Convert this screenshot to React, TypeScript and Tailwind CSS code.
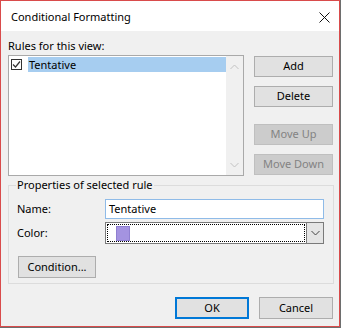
import React from 'react';

const font = { fontFamily: '"Segoe UI", "Noto Sans", "Open Sans", sans-serif' };

function Chevron({ up, className }: { up?: boolean; className?: string }) {
  return (
    <svg width="9" height="6" viewBox="0 0 9 6" className={className}>
      <path
        d={up ? 'M0.5 5 L4.5 1 L8.5 5' : 'M0.5 1 L4.5 5 L8.5 1'}
        fill="none"
        stroke="currentColor"
        strokeWidth="1"
      />
    </svg>
  );
}

function Btn({ label, disabled, className = '' }: { label: string; disabled?: boolean; className?: string }) {
  return (
    <div
      className={
        'h-[21px] flex items-center justify-center text-[11px] border ' +
        (disabled
          ? 'bg-[#cccccc] border-[#bfbfbf] text-[#838383] '
          : 'bg-[#e1e1e1] border-[#adadad] text-black ') +
        className
      }
    >
      {label}
    </div>
  );
}

export default function App() {
  return (
    <div className="w-[341px] h-[328px] bg-[#6e6e6e]" style={font}>
      <div className="w-[340px] h-[327px] border border-[#d94b4b] bg-[#f0f0f0] flex flex-col">
        {/* Title bar */}
        <div className="h-[30px] bg-white flex items-center justify-between pl-[10px] pr-[9px] pt-[2px]">
          <span className="text-[11px] text-black">Conditional Formatting</span>
          <svg width="11" height="11" viewBox="0 0 11 11">
            <path d="M0.5 0.5 L10.5 10.5 M10.5 0.5 L0.5 10.5" stroke="#111" strokeWidth="1" />
          </svg>
        </div>

        <div className="pl-[7px] pt-[8px] text-black">
          {/* Rules list + buttons */}
          <div className="flex">
            <div className="w-[236px]">
              <div className="h-[16px] leading-[14px] text-[11px]">Rules for this view:</div>
              <div className="h-[121px] border border-[#a9a9a9] bg-white flex">
                <div className="flex-1 pt-[1px]">
                  <div className="flex items-center h-[15px]">
                    <div className="ml-[2px] w-[11px] h-[11px] border border-[#333] bg-white flex items-center justify-center">
                      <svg width="9" height="9" viewBox="0 0 9 9">
                        <path d="M1 4.5 L3.5 7 L8 1.5" fill="none" stroke="#333" strokeWidth="1.2" />
                      </svg>
                    </div>
                    <div className="ml-[6px] flex-1 h-[15px] bg-[#a6cdf0] pl-[1px] text-[11px] leading-[15px]">Tentative</div>
                  </div>
                </div>
                <div className="w-[17px] bg-[#f0f0f0] flex flex-col items-center justify-between pt-[8px] pb-[7px] text-[#c2c2c2]">
                  <Chevron up />
                  <Chevron />
                </div>
              </div>
            </div>
            <div className="ml-[10px] w-[79px] pt-[17px]">
              <Btn label="Add" />
              <Btn label="Delete" className="mt-[9px]" />
              <Btn label="Move Up" disabled className="mt-[17px]" />
              <Btn label="Move Down" disabled className="mt-[9px]" />
            </div>
          </div>

          {/* Properties group */}
          <div className="relative mt-[9px] w-[326px] h-[99px] border border-[#dcdcdc] pl-[8px] pr-[9px] pt-[13px]">
            <span className="absolute -top-[9px] left-[7px] bg-[#f0f0f0] px-[1px] text-[11px] leading-[16px]">
              Properties of selected rule
            </span>
            <div className="flex items-center">
              <span className="w-[88px] text-[11px]">Name:</span>
              <div className="w-[219px] h-[20px] border border-[#8fbbe8] bg-white flex items-center pl-[3px] text-[11px]">
                Tentative
              </div>
            </div>
            <div className="flex items-center mt-[3px]">
              <span className="w-[88px] text-[11px]">Color:</span>
              <div className="w-[219px] h-[22px] border border-[#7a7a7a] bg-white flex">
                <div className="flex-1 m-[1px] border border-dotted border-black flex items-center pl-[8px]">
                  <div className="w-[14px] h-[15px] bg-[#a493e0] border border-[#8f7fd0]" />
                </div>
                <div className="w-[17px] bg-[#e5e5e5] border-l border-[#7a7a7a] flex items-center justify-center text-[#444]">
                  <Chevron />
                </div>
              </div>
            </div>
            <div className="mt-[12px] ml-[1px] w-[78px] h-[22px] border border-[#adadad] bg-[#e1e1e1] flex items-center justify-center text-[11px]">
              Condition...
            </div>
          </div>

          {/* OK / Cancel */}
          <div className="w-[326px] flex justify-end mt-[13px]">
            <div className="w-[74px] h-[22px] border-2 border-[#0078d7] bg-[#e1e1e1] flex items-center justify-center text-[11px]">
              OK
            </div>
            <div className="ml-[10px] mr-[1px] w-[74px] h-[22px] border border-[#adadad] bg-[#e1e1e1] flex items-center justify-center text-[11px]">
              Cancel
            </div>
          </div>
        </div>
      </div>
    </div>
  );
}
